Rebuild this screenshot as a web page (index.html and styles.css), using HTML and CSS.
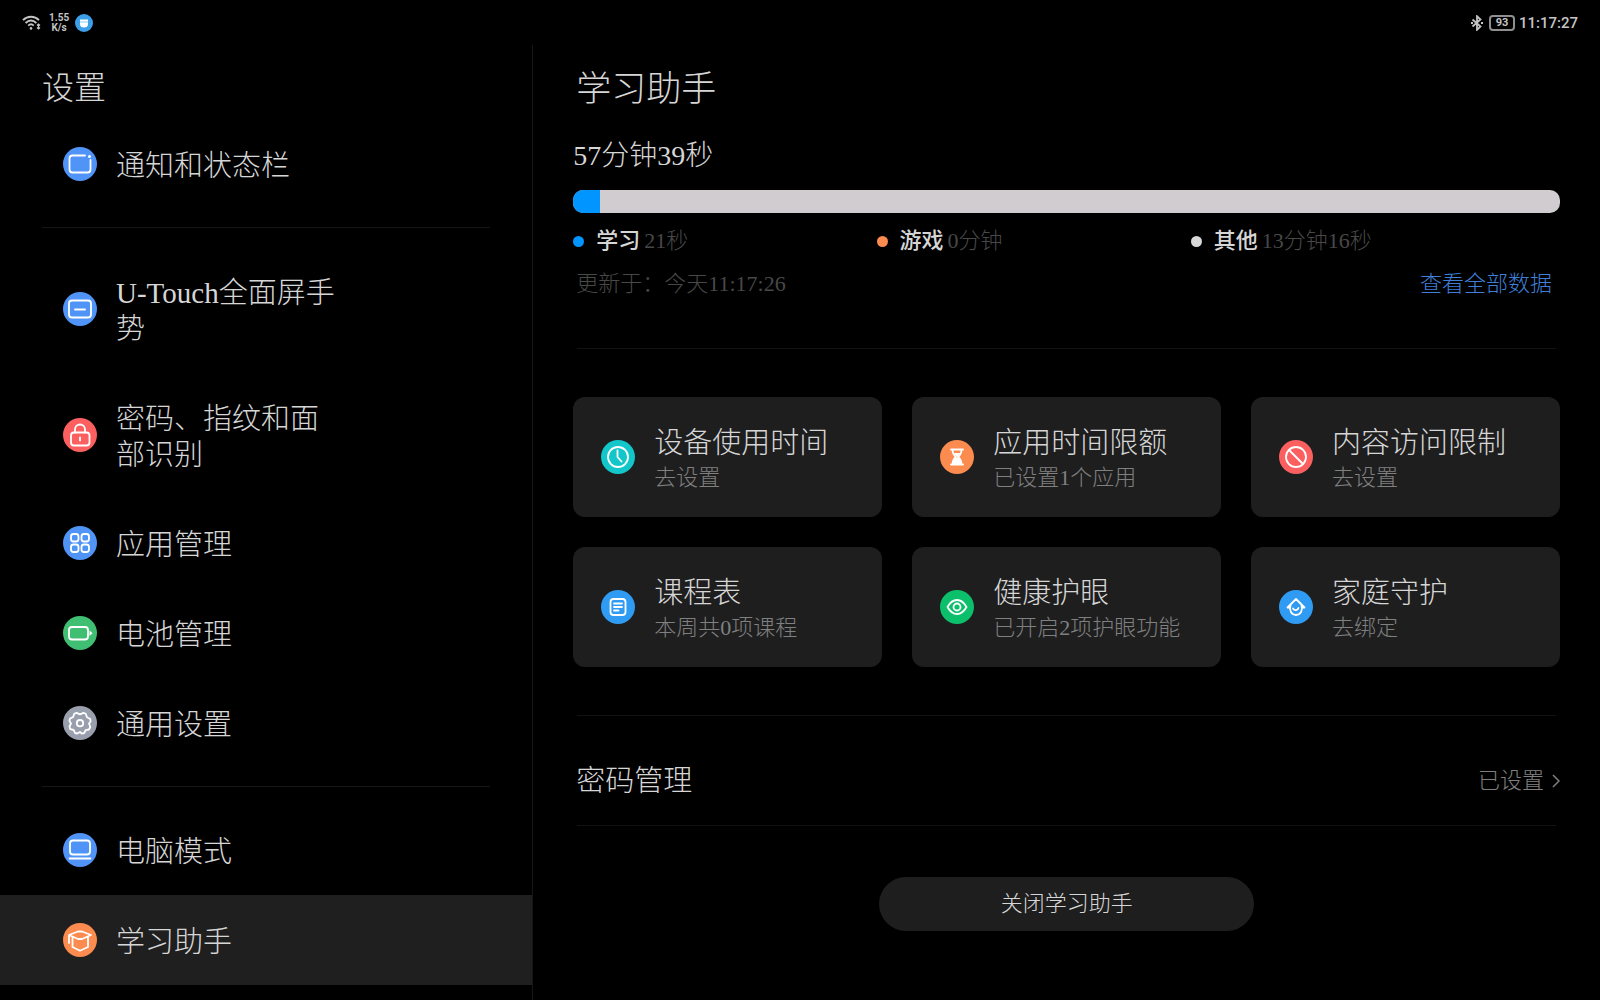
FILE: index.html
```html
<!DOCTYPE html>
<html lang="zh-CN">
<head>
  <meta charset="UTF-8">
  <meta name="viewport" content="width=device-width, initial-scale=1.0">
  <title>学习助手</title>
  <link rel="stylesheet" href="styles.css">
</head>
<body>

  <header class="status-bar">
    <div class="status-left">
      <svg class="wifi-icon" viewBox="0 0 20 16" fill="none" stroke="currentColor" stroke-width="1.9">
        <path d="M1 5.2C5.500 .6 12.500 .6 17 5.200M3.600 8C7 4.700 11 4.700 14.400 8M6.200 10.600C8 9 10 9 11.800 10.600"/>
        <circle cx="9" cy="13.400" r="1.300" fill="currentColor" stroke="none"/>
        <path d="M16.500 9v5M15 10.500l1.500-1.500 1.500 1.500M15 12.500l1.500 1.500 1.500-1.500" stroke-width="1.2"/>
      </svg>
      <span class="net-speed">1.55<br>K/s</span>
      <svg class="app-icon" viewBox="0 0 18 18">
        <circle cx="9" cy="9" r="9" fill="#3d9fe8"/>
        <path d="M5 5.500h8v4.500a4 3.500 0 0 1-8 0z" fill="#fff"/>
        <path d="M5 8h8" stroke="#8ccbf5" stroke-width="1"/>
      </svg>
    </div>
    <div class="status-right">
      <svg class="bt-icon" viewBox="0 0 14 16" fill="none" stroke="currentColor" stroke-width="1.800">
        <path d="M2.500 4.500l8 7-3.500 3.300V1.200l3.500 3.300-8 7"/>
        <path d="M1 8h2M11 8h2"/>
      </svg>
      <span class="battery">93</span>
      <span class="clock">11:17:27</span>
    </div>
  </header>

  <div class="layout">
    <aside class="sidebar">
      <h2 class="sidebar-title">设置</h2>
      <nav class="menu">
        <a href="#notify" class="menu-item">
          <svg class="icon" viewBox="0 0 34 34">
            <circle class="blue" cx="17" cy="17" r="17"/>
            <path class="line" d="M22 8.500H9.500a3 3 0 0 0-3 3v11a3 3 0 0 0 3 3h15a3 3 0 0 0 3-3V13"/>
            <circle cx="26.500" cy="9.500" r="1.500" fill="#fff"/>
          </svg>
          <span>通知和状态栏</span>
        </a>
        <hr class="menu-line">
        <a href="#gesture" class="menu-item">
          <svg class="icon" viewBox="0 0 34 34">
            <circle class="blue" cx="17" cy="17" r="17"/>
            <rect class="line" x="6" y="8.500" width="22" height="17" rx="3"/>
            <path class="line" d="M12 17.500h10"/>
          </svg>
          <span>U-Touch全面屏手势</span>
        </a>
        <a href="#security" class="menu-item">
          <svg class="icon" viewBox="0 0 34 34">
            <circle class="red" cx="17" cy="17" r="17"/>
            <rect class="line" x="8" y="14.500" width="18.500" height="13" rx="3"/>
            <path class="line" d="M12 14.500V11.500a5 5 0 0 1 10 0V14.500M17 19.500v3"/>
          </svg>
          <span>密码、指纹和面部识别</span>
        </a>
        <a href="#apps" class="menu-item">
          <svg class="icon" viewBox="0 0 34 34">
            <circle class="blue" cx="17" cy="17" r="17"/>
            <rect class="line" x="8" y="8" width="7.500" height="7.500" rx="2.500"/>
            <rect class="line" x="18.500" y="8" width="7.500" height="7.500" rx="2.500"/>
            <rect class="line" x="8" y="18.500" width="7.500" height="7.500" rx="2.500"/>
            <rect class="line" x="18.500" y="18.500" width="7.500" height="7.500" rx="2.500"/>
          </svg>
          <span>应用管理</span>
        </a>
        <a href="#battery" class="menu-item">
          <svg class="icon" viewBox="0 0 34 34">
            <circle class="green" cx="17" cy="17" r="17"/>
            <rect class="line" x="6" y="11" width="19" height="12.500" rx="3"/>
            <path d="M26.500 14.500l3 2.700-3 2.800z" fill="#fff"/>
          </svg>
          <span>电池管理</span>
        </a>
        <a href="#general" class="menu-item">
          <svg class="icon" viewBox="0 0 34 34">
            <circle class="gray" cx="17" cy="17" r="17"/>
            <path class="line" d="M13.500 6.800L17 8.300l3.500-1.500 2.200 1L24 11.300l3.200 1.700.4 2.500L26 17.500l1.300 3.500-1.300 2.500-3.300.7-1.700 3-2.200.3L17 26l-2.800 1.500-2.200-.5-1.300-3-3.400-.8L6.500 20.500 8 17.500 6.400 15l.6-2.500 3-1.300 1.300-3.400z"/>
            <circle class="line" cx="17" cy="17.200" r="3.200"/>
          </svg>
          <span>通用设置</span>
        </a>
        <hr class="menu-line">
        <a href="#desktop" class="menu-item">
          <svg class="icon" viewBox="0 0 34 34">
            <circle class="blue" cx="17" cy="17" r="17"/>
            <rect class="line" x="7" y="7.500" width="20" height="14" rx="3"/>
            <path class="line" d="M6.500 25.500h21"/>
          </svg>
          <span>电脑模式</span>
        </a>
        <a href="#study" class="menu-item active">
          <svg class="icon" viewBox="0 0 34 34">
            <circle class="orange" cx="17" cy="17" r="17"/>
            <path class="line" d="M6 12l9-3.500h4l9 3.500-9 4h-4zM9.500 14v10l7.500 3.800 8-3.800V14M6 12.500v7.500"/>
          </svg>
          <span>学习助手</span>
        </a>
      </nav>
    </aside>

    <main class="content">
      <h1 class="page-title">学习助手</h1>

      <section class="usage">
        <p class="total-time">57分钟39秒</p>
        <div class="usage-bar">
          <div class="usage-study" style="width: 2.7%"></div>
        </div>
        <ul class="legend">
          <li><i class="dot dot-study"></i><b>学习</b><span>21秒</span></li>
          <li><i class="dot dot-game"></i><b>游戏</b><span>0分钟</span></li>
          <li><i class="dot dot-other"></i><b>其他</b><span>13分钟16秒</span></li>
        </ul>
        <div class="update-row">
          <span>更新于：今天11:17:26</span>
          <a href="#all" class="all-link">查看全部数据</a>
        </div>
      </section>

      <hr class="content-line">

      <section class="cards">
        <a href="#device-time" class="card">
          <svg class="icon" viewBox="0 0 34 34">
            <circle class="cyan" cx="17" cy="17" r="17"/>
            <circle class="line" cx="17" cy="17" r="10"/>
            <path class="line" d="M16.500 10.500v6.500l4 4.500"/>
          </svg>
          <div class="card-text">
            <h3>设备使用时间</h3>
            <p>去设置</p>
          </div>
        </a>
        <a href="#app-limit" class="card">
          <svg class="icon" viewBox="0 0 34 34">
            <circle class="orange" cx="17" cy="17" r="17"/>
            <path class="line" d="M11 9.500h12M11 24.500h12M12.500 9.500c0 4 1.500 6 3.500 7.500-2 1.500-3.500 3.500-3.500 7.500M21.500 9.500c0 4-1.500 6-3.500 7.500 2 1.500 3.500 3.500 3.500 7.500"/>
            <path d="M13.500 13h7L17 17zM12 24.500c0-3.500 2-6 5-7 3 1 5 3.500 5 7z" fill="#fff"/>
          </svg>
          <div class="card-text">
            <h3>应用时间限额</h3>
            <p>已设置1个应用</p>
          </div>
        </a>
        <a href="#content-limit" class="card">
          <svg class="icon" viewBox="0 0 34 34">
            <circle class="red" cx="17" cy="17" r="17"/>
            <circle class="line" cx="17" cy="17" r="10"/>
            <path class="line" d="M10 10l14 14"/>
          </svg>
          <div class="card-text">
            <h3>内容访问限制</h3>
            <p>去设置</p>
          </div>
        </a>
        <a href="#timetable" class="card">
          <svg class="icon" viewBox="0 0 34 34">
            <circle class="sky" cx="17" cy="17" r="17"/>
            <rect class="line" x="9.500" y="9" width="15" height="16" rx="3"/>
            <path class="line" d="M13 13.500h8M13 17h8M13 20.500h4.500"/>
          </svg>
          <div class="card-text">
            <h3>课程表</h3>
            <p>本周共0项课程</p>
          </div>
        </a>
        <a href="#eye-care" class="card">
          <svg class="icon" viewBox="0 0 34 34">
            <circle class="emerald" cx="17" cy="17" r="17"/>
            <path class="line" d="M7.500 17C10 12.500 13 10 17 10s7 2.500 9.500 7c-2.500 4.500-5.500 7-9.500 7s-7-2.500-9.500-7z"/>
            <circle class="line" cx="17" cy="17" r="3.500"/>
          </svg>
          <div class="card-text">
            <h3>健康护眼</h3>
            <p>已开启2项护眼功能</p>
          </div>
        </a>
        <a href="#family" class="card">
          <svg class="icon" viewBox="0 0 34 34">
            <circle class="sky" cx="17" cy="17" r="17"/>
            <path class="line" d="M8.500 17.500L17 9l8.500 8.500M11.500 15.500c-1.500 5 1 9.500 5.500 9.500s7-4.500 5.500-9.500M8.500 17.500h2.500M23 17.500h2.500M14 18.500c1.500 2.500 4.500 2 5.500-.5"/>
          </svg>
          <div class="card-text">
            <h3>家庭守护</h3>
            <p>去绑定</p>
          </div>
        </a>
      </section>

      <hr class="content-line">

      <a href="#password" class="password-row">
        <span class="password-label">密码管理</span>
        <span class="password-state">已设置
          <svg class="arrow" viewBox="0 0 8 14" fill="none" stroke="currentColor" stroke-width="1.500"><path d="M1 1l6 6-6 6"/></svg>
        </span>
      </a>

      <hr class="content-line">

      <button type="button" class="close-btn">关闭学习助手</button>
    </main>
  </div>

</body>
</html>
```
FILE: styles.css
```css
* {
  box-sizing: border-box;
}

body {
  margin: 0;
  min-height: 100vh;
  display: flex;
  flex-direction: column;
  background: #000;
  color: #d6d6d6;
  font-family: "Liberation Serif", "Noto Sans CJK SC", serif;
  font-weight: 300;
  font-size: 29px;
  line-height: 36px;
}

h1, h2, h3, p, ul {
  margin: 0;
  padding: 0;
  font-weight: 300;
}

a {
  color: inherit;
  text-decoration: none;
}

/* Status bar */
.status-bar {
  display: flex;
  justify-content: space-between;
  align-items: center;
  height: 45px;
  padding: 0 22px;
  font-family: Roboto, sans-serif;
  color: #c4c4c4;
}

.status-left,
.status-right {
  display: flex;
  align-items: center;
}

.wifi-icon {
  width: 20px;
  height: 16px;
}

.net-speed {
  margin: 0 6px 0 7px;
  font-size: 10px;
  font-weight: 700;
  line-height: 10px;
  text-align: center;
}

.app-icon {
  width: 18px;
  height: 18px;
}

.bt-icon {
  width: 14px;
  height: 16px;
}

.battery {
  width: 26px;
  height: 16px;
  margin: 0 4px 0 5px;
  border: 2px solid #8f8f8f;
  border-radius: 4px;
  font-size: 11px;
  font-weight: 700;
  line-height: 12px;
  text-align: center;
}

.clock {
  font-size: 15px;
  font-weight: 500;
}

/* Layout */
.layout {
  flex: 1;
  display: grid;
  grid-template-columns: 1fr 2fr;
}

/* Sidebar */
.sidebar {
  border-right: 1px solid #161616;
}

.sidebar-title {
  padding: 21px 42px 9px;
  font-size: 32px;
  line-height: 44px;
}

.menu-item {
  display: flex;
  align-items: center;
  gap: 19px;
  padding: 25px 63px;
}

.menu-item span {
  max-width: 228px;
  padding-top: 4px;
}

.menu-item.active {
  background: #1f1f20;
}

.menu-line {
  height: 1px;
  margin: 18px 42px;
  border: none;
  background: #161616;
}

/* Round icons */
.icon {
  flex: none;
  width: 34px;
  height: 34px;
}

.line {
  fill: none;
  stroke: #fff;
  stroke-width: 1.8;
  stroke-linecap: round;
  stroke-linejoin: round;
}

.blue { fill: #5094f7; }
.red { fill: #fb5f5f; }
.green { fill: #40bf72; }
.gray { fill: #9a9fae; }
.orange { fill: #fb8b4e; }
.cyan { fill: #12c6ca; }
.sky { fill: #2f9bf2; }
.emerald { fill: #0cc06b; }

/* Content */
.content {
  padding: 21px 40px;
}

.page-title {
  padding-left: 3px;
  font-size: 35px;
  line-height: 48px;
}

.total-time {
  margin: 22px 0 14px;
  font-size: 28px;
  line-height: 40px;
}

.content-line {
  height: 1px;
  margin: 0 4px;
  border: none;
  background: #121212;
}

.usage-bar {
  height: 23px;
  border-radius: 10px;
  background: #d0cccf;
  overflow: hidden;
}

.usage-study {
  height: 100%;
  background: #0095ff;
}

.legend {
  display: flex;
  margin: 13px 0;
  list-style: none;
  font-size: 22px;
  line-height: 30px;
}

.legend li {
  flex: 1 1 auto;
  display: flex;
  align-items: center;
}

.legend b {
  margin: 0 4px 0 12px;
  font-weight: 500;
}

.legend span {
  color: #484848;
}

.dot {
  width: 11px;
  height: 11px;
  border-radius: 50%;
}

.dot-study { background: #0095ff; }
.dot-game { background: #fb8b4e; }
.dot-other { background: #d8d8d8; }

.update-row {
  display: flex;
  justify-content: space-between;
  padding: 0 8px 49px 3px;
  font-size: 22px;
  line-height: 30px;
  color: #484848;
}

.all-link {
  color: #3f7fd8;
}

/* Cards */
.cards {
  display: grid;
  grid-template-columns: repeat(3, 1fr);
  gap: 30px;
  padding: 48px 0;
}

.card {
  display: flex;
  align-items: center;
  gap: 19px;
  min-height: 120px;
  padding: 24px 28px;
  border-radius: 12px;
  background: #1e1e1f;
}

.card-text {
  padding-top: 4px;
}

.card h3 {
  font-size: 29px;
  line-height: 36px;
}

.card p {
  margin-top: 2px;
  font-size: 22px;
  line-height: 30px;
  color: #808080;
}

/* Password row */
.password-row {
  display: flex;
  justify-content: space-between;
  align-items: center;
  padding: 47px 0 26px 3px;
}

.password-state {
  display: flex;
  align-items: center;
  gap: 8px;
  font-size: 22px;
  color: #808080;
}

.arrow {
  width: 8px;
  height: 14px;
}

.close-btn {
  display: block;
  width: 38%;
  height: 54px;
  margin: 51px auto 0;
  border: none;
  border-radius: 27px;
  background: #1e1e1f;
  color: inherit;
  font: inherit;
  font-size: 22px;
}
```
